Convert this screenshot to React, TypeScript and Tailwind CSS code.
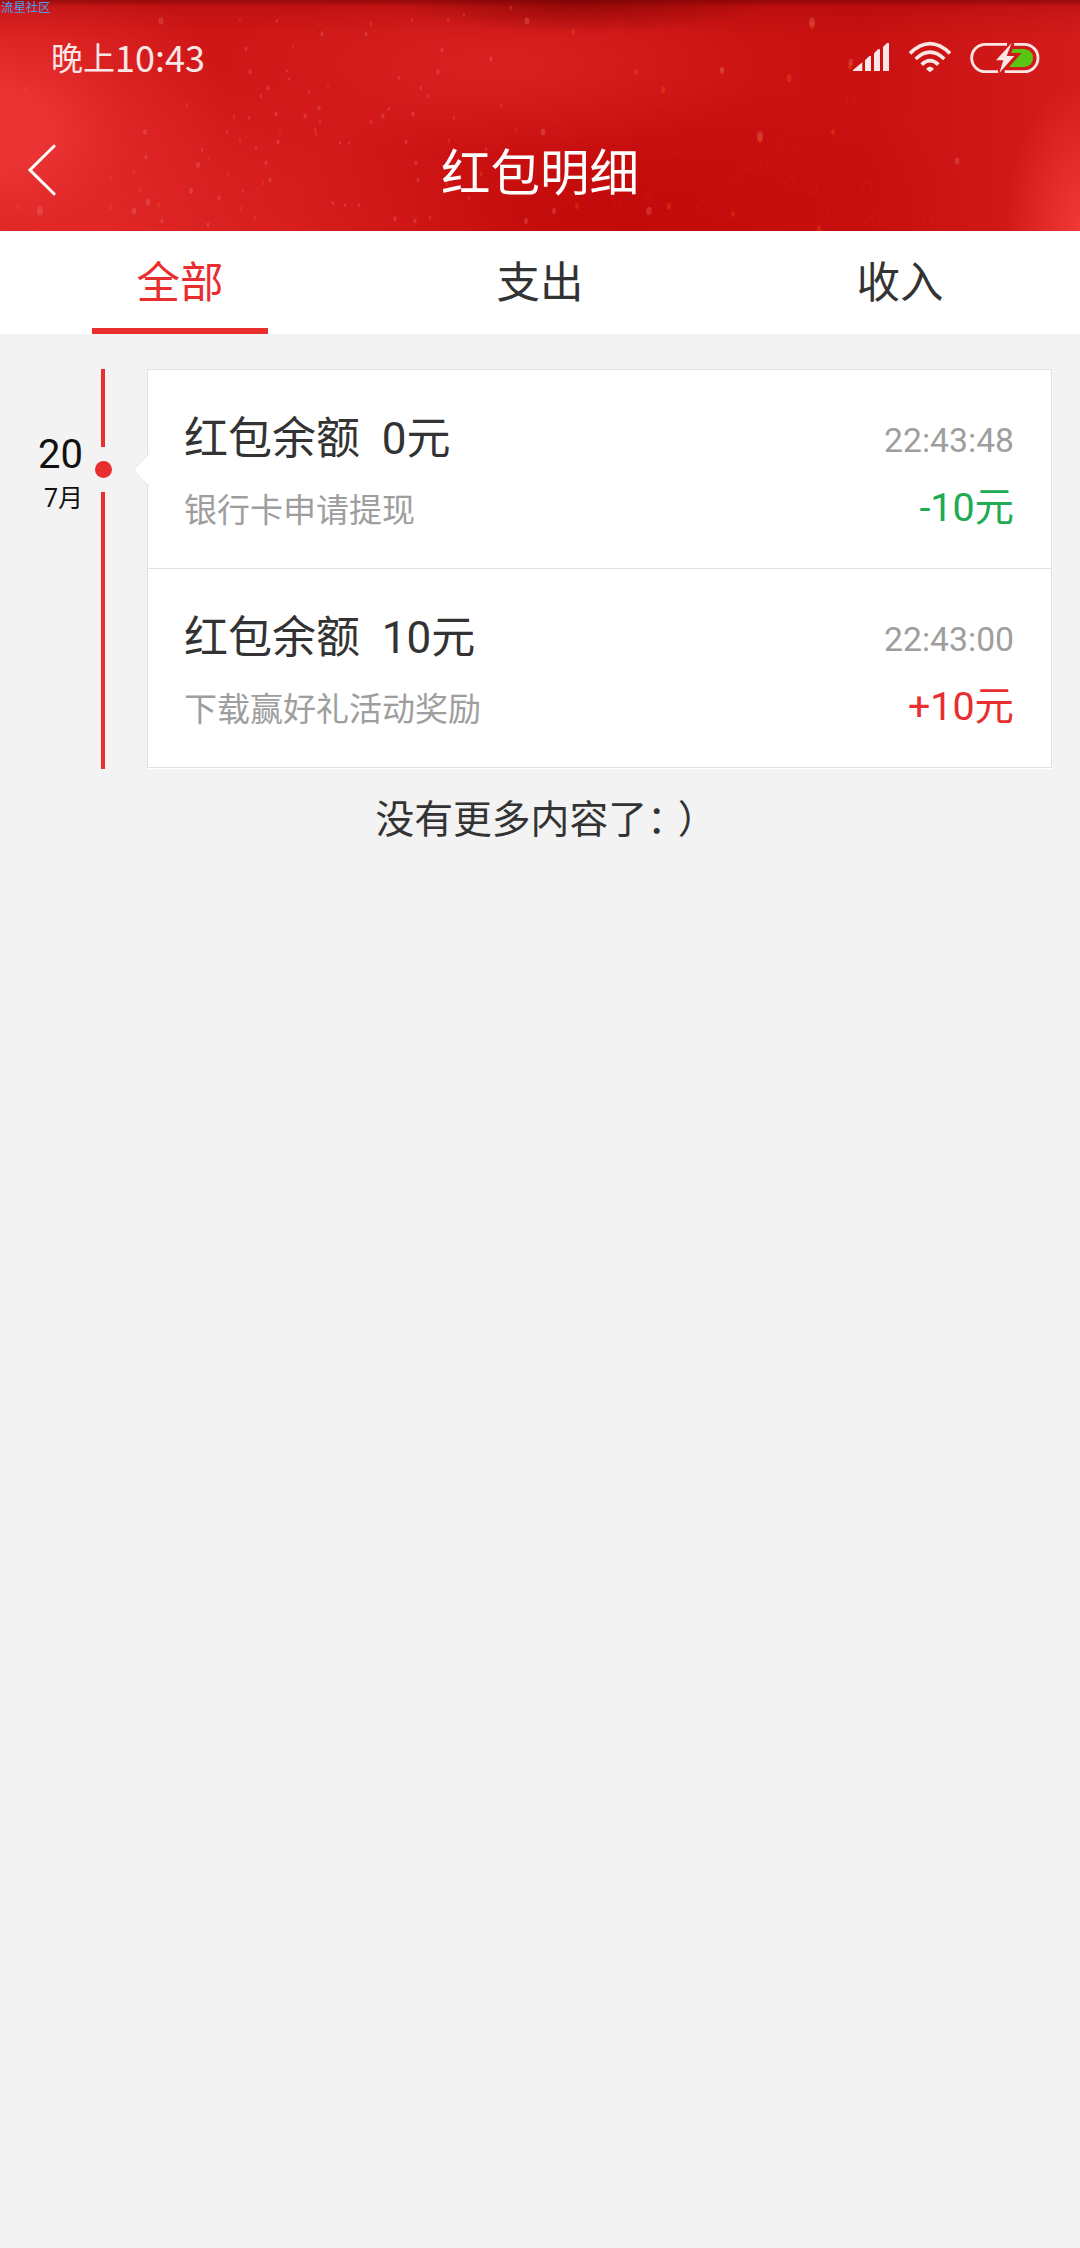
import { useState } from 'react';

interface Entry {
  title: string;
  balance: string;
  note: string;
  time: string;
  amount: string;
  type: 'in' | 'out';
}

const tabs = ['全部', '支出', '收入'];

const entries: Entry[] = [
  { title: '红包余额', balance: '0元', note: '银行卡申请提现', time: '22:43:48', amount: '-10元', type: 'out' },
  { title: '红包余额', balance: '10元', note: '下载赢好礼活动奖励', time: '22:43:00', amount: '+10元', type: 'in' },
];

// Glitter on the header banner: x, y, radius
const paleSpecks = [
  [161, 21, 3], [322, 34, 2], [366, 34, 2], [246, 49, 2], [442, 50, 2], [491, 59, 2], [527, 21, 3], [250, 72, 2],
  [438, 72, 2], [268, 88, 2], [261, 96, 1.5], [289, 79, 1.5], [421, 88, 1.5], [428, 96, 1.5], [319, 108, 2],
  [276, 114, 2], [305, 116, 2], [383, 116, 2], [413, 114, 2], [389, 109, 1.5], [145, 132, 2.5], [278, 142, 2],
  [227, 132, 1.5], [406, 142, 2], [146, 157, 2], [198, 165, 2.5], [202, 150, 1.5], [266, 163, 2], [416, 163, 2],
  [191, 191, 2.5], [270, 180, 2], [418, 180, 2], [148, 202, 3], [134, 211, 3], [40, 211, 4], [162, 221, 2],
  [219, 198, 2], [243, 191, 1.5], [340, 143, 1.5], [349, 143, 1.5], [333, 203, 1.5], [345, 205, 1.5],
  [359, 205, 1.5], [395, 219, 2], [415, 221, 2], [526, 221, 2.5], [543, 132, 3], [554, 211, 2.5], [649, 211, 3.5],
  [812, 22, 4], [760, 136, 4], [957, 161, 3], [722, 70, 2.5], [851, 62, 3], [277, 21, 1.5], [412, 20, 1.5],
  [464, 15, 1.5], [399, 78, 1.5], [287, 71, 1.5], [309, 92, 1.5], [486, 149, 1.5], [249, 118, 1.5], [208, 225, 2],
  [320, 122, 1.5], [371, 122, 1.5], [315, 130, 1.5], [256, 148, 1.5], [469, 198, 1.5], [506, 154, 1.5],
];

const goldSpecks = [
  [26, 89, 2], [187, 105, 2], [18, 207, 2], [111, 207, 2.5], [134, 172, 2], [111, 177, 1.5], [140, 190, 2],
  [159, 205, 2], [240, 141, 2], [234, 117, 2], [316, 134, 2], [371, 24, 2], [320, 24, 1.5], [240, 20, 1.5],
  [448, 20, 2], [454, 118, 2], [501, 105, 2], [449, 141, 2], [516, 130, 1.5], [228, 174, 2], [209, 158, 1.5],
  [293, 47, 1.5], [328, 86, 1.5], [280, 131, 1.5], [263, 183, 2], [447, 184, 2], [481, 174, 2], [241, 209, 2],
  [255, 218, 2], [430, 218, 2], [511, 8, 2], [573, 32, 2.5], [636, 72, 2.5], [663, 90, 3], [722, 71, 3],
  [789, 78, 3.5], [833, 132, 2.5], [812, 25, 3.5], [760, 139, 3.5], [577, 206, 2.5], [669, 206, 3], [733, 214, 2.5],
  [819, 229, 3], [850, 66, 3],
];

const redSpecks = [
  [610, 25, 3], [621, 24, 3.5], [616, 60, 3], [659, 102, 3], [822, 113, 4], [832, 128, 4], [851, 100, 4], [779, 145, 4],
  [795, 152, 4], [747, 166, 3.5], [736, 178, 3.5], [764, 163, 3.5], [790, 182, 4], [813, 189, 4], [867, 188, 5],
  [833, 210, 5], [864, 217, 5], [877, 219, 5], [928, 220, 5], [945, 192, 4], [963, 162, 4], [911, 117, 5],
  [675, 150, 3.5], [617, 203, 4], [701, 207, 4], [67, 25, 3], [77, 25, 3], [116, 33, 2.5], [648, 195, 3],
];

function BannerSpecks() {
  return (
    <svg className="absolute inset-0 h-full w-full" viewBox="0 0 1080 231" fill="none">
      {redSpecks.map(([x, y, r], i) => (
        <ellipse key={i} cx={x} cy={y} rx={r} ry={r * 1.3} stroke="#f01a1a" strokeWidth="1.5" opacity="0.22" />
      ))}
      {paleSpecks.map(([x, y, r], i) => (
        <ellipse key={i} cx={x} cy={y} rx={r * 0.8} ry={r * 1.2} fill="#f28080" opacity="0.28" />
      ))}
      {goldSpecks.map(([x, y, r], i) => (
        <ellipse key={i} cx={x} cy={y} rx={r * 0.7} ry={r * 1.2} fill="#f0601c" opacity="0.3" />
      ))}
    </svg>
  );
}

function StatusIcons() {
  return (
    <svg className="h-[60px] w-[220px]" viewBox="0 0 660 180" fill="#fbe6e6">
      {/* Signal */}
      <path d="M69 123V120L97 97V123Z" />
      <path d="M105 123V91L118 78H123V123Z" />
      <path d="M132 123V70L144 58H150V123Z" />
      <path d="M159 123V51L171 39H177V123Z" />
      {/* Wifi */}
      <g fill="none" stroke="#fbe6e6" strokeWidth="11">
        <path d="M240 70Q300 12 360 70" />
        <path d="M257 87Q300 46 343 87" />
        <path d="M275 104Q300 80 325 104" />
      </g>
      <path d="M288 117Q300 102 312 117L300 127Z" />
      {/* Battery */}
      <path
        d="M531 43H466A41 41 0 0 0 466 125H504M552 43H583A41 41 0 0 1 583 125H524"
        fill="none"
        stroke="#fbe6e6"
        strokeWidth="8.5"
      />
      <path d="M548 57H583Q609 61 609 84T583 111H537L575 69H544Z" fill="#5bc514" />
      <path d="M545 39L498 91H520L508 129L553 78H530Z" />
    </svg>
  );
}

function EntryRow({ entry }: { entry: Entry }) {
  return (
    <div className="flex h-[199px] justify-between border-b border-[#e2e2e2] pl-9 pr-[37px]">
      <div className="flex flex-col pt-[37px]">
        <span className="whitespace-pre text-[44px] leading-[64px] text-[#333]">
          {entry.title}
          {'  '}
          {entry.balance}
        </span>
        <span className="mt-4 text-[33px] leading-[48px] text-[#9e9e9e]">{entry.note}</span>
      </div>
      <div className="flex flex-col items-end pt-[47px]">
        <span className="text-[33.7px] leading-[48px] text-[#9e9e9e]">{entry.time}</span>
        <span
          className={`mt-[13px] text-[39.4px] leading-[60px] ${entry.type === 'in' ? 'text-[#e82e2e]' : 'text-[#20aa54]'}`}
        >
          {entry.amount}
        </span>
      </div>
    </div>
  );
}

export default function App() {
  const [active, setActive] = useState(0);

  return (
    <div className="flex h-[2248px] w-[1080px] flex-col overflow-hidden bg-[#f3f3f3] font-['Roboto','Noto_Sans_CJK_SC',sans-serif]">
      {/* Header */}
      <header className="relative h-[231px] bg-[linear-gradient(180deg,rgba(110,0,0,0.6)_0px,rgba(140,0,0,0.22)_7px,rgba(150,0,0,0.1)_22px,transparent_38px),radial-gradient(ellipse_190px_34px_at_580px_0px,rgba(110,0,0,0.6),transparent),radial-gradient(ellipse_80px_150px_at_1085px_231px,#f23a3a,transparent),radial-gradient(ellipse_230px_180px_at_0px_130px,rgba(235,52,52,0.95)_20%,rgba(228,42,42,0.5)_60%,transparent),radial-gradient(ellipse_400px_170px_at_110px_231px,rgba(228,42,42,0.7),transparent),radial-gradient(ellipse_280px_90px_at_500px_65px,rgba(222,38,38,0.7),transparent),radial-gradient(ellipse_350px_140px_at_630px_215px,#c30a0a,transparent),linear-gradient(90deg,#d11818,#cf1616_40%,#c91111_80%,#d41c1c)]">
        <BannerSpecks />
        <span className="absolute left-px top-0 font-['Noto_Sans_CJK_SC',sans-serif] text-[12.4px] leading-[14px] text-[#4a9cf0]">
          流星社区
        </span>
        <div className="relative flex h-[114px] justify-between pl-[51px] pr-[30px] pt-[30px]">
          <div className="-mt-1 flex h-[60px] items-center font-['Noto_Sans_CJK_SC',sans-serif] text-[#fbe6e6]">
            <span className="text-[32px]">晚上</span>
            <span className="text-[36px]">10:43</span>
          </div>
          <StatusIcons />
        </div>
        <div className="relative flex h-[117px] items-center px-7">
          <button type="button" className="mb-1.5 w-7">
            <svg className="h-[52px] w-7" viewBox="0 0 28 52" fill="none" stroke="#fff" strokeWidth="3">
              <path d="M27 1.2L2 26L27 50.8" />
            </svg>
          </button>
          <h1 className="flex-1 pr-7 pt-0.5 text-center text-[49.5px] leading-[72px] text-white">红包明细</h1>
        </div>
      </header>

      {/* Tabs */}
      <nav className="flex h-[103px] bg-white">
        {tabs.map((tab, i) => (
          <button
            key={tab}
            type="button"
            onClick={() => setActive(i)}
            className={`flex flex-1 flex-col items-center justify-between pt-[21px] text-[43.5px] leading-[64px] ${
              i === active ? 'text-[#e82e2e]' : 'text-[#333]'
            }`}
          >
            {tab}
            {i === active && <span className="h-1.5 w-44 bg-[#e82e2e]" />}
          </button>
        ))}
      </nav>

      {/* Timeline */}
      <main className="flex pr-7 pt-[35px]">
        <div className="flex w-[83px] flex-col items-end pt-[63px] text-[#111]">
          <span className="text-[40px] leading-[46px]">20</span>
          <span className="pt-[3px] text-[25px] leading-[36px]">7月</span>
        </div>
        <div className="ml-3 flex w-[17px] flex-col items-start">
          <span className="ml-1.5 h-[78px] w-1 bg-[#e82e2e]" />
          <span className="my-3.5 size-[17px] rounded-full bg-[#e82e2e]" />
          <span className="ml-1.5 w-1 flex-1 bg-[#e82e2e]" />
        </div>
        <section className="relative ml-[35px] flex-1 border-b border-white">
          <div className="border-x border-t border-[#e2e2e2] bg-white">
            {entries.map((entry) => (
              <EntryRow key={entry.time} entry={entry} />
            ))}
          </div>
          <svg className="absolute -left-[14px] top-[84px] h-[34px] w-[17px]" viewBox="0 0 17 34">
            <path d="M17 0L0.5 17L17 34" fill="#fff" stroke="#e9e9e9" strokeWidth="1" />
          </svg>
        </section>
      </main>

      <p className="mt-[22px] pl-3 text-center text-[38.8px] leading-[58px] text-[#333] [text-spacing-trim:space-all]">
        没有更多内容了<span className="tracking-[-8px]">：</span>）
      </p>
    </div>
  );
}
